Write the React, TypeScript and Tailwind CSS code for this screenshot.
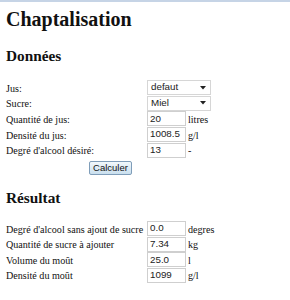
const Field = ({ value }: { value: string }) => (
  <div className="flex h-[15px] w-[39px] items-center border border-[#cfcfcf] bg-white pl-[2px] font-['Liberation_Sans',Arial,sans-serif] text-[9.8px] text-[#222]">
    {value}
  </div>
)

const Dropdown = ({ value }: { value: string }) => (
  <div className="flex h-[15px] w-[64px] items-center justify-between border border-[#d6d6d6] bg-white pl-[3px] pr-[4px] font-['Liberation_Sans',Arial,sans-serif] text-[9.8px] text-[#222]">
    <span>{value}</span>
    <svg width="6" height="4" viewBox="0 0 6 4">
      <path d="M0 0H6L3 3.5Z" fill="#222" />
    </svg>
  </div>
)

const Row = ({ label, children, unit }: { label: string; children: React.ReactNode; unit?: string }) => (
  <div className="flex h-[15.6px] items-center">
    <span className="w-[141px] shrink-0 pt-[1px]">{label}</span>
    {children}
    {unit && <span className="ml-[2px] pt-[1px]">{unit}</span>}
  </div>
)

export default function App() {
  return (
    <div className="h-[300px] w-[290px] border-t-2 border-[#c6d4e6] bg-white font-['Liberation_Serif','Times_New_Roman',serif] text-[10.1px] text-[#111]">
      <div className="px-[6px]">
        <h1 className="mt-[7px] h-[20px] text-[20px] font-bold leading-[20px]">Chaptalisation</h1>
        <h2 className="mt-[18.5px] h-[16px] text-[15.3px] font-bold leading-[16px]">Données</h2>

        <div className="mt-[16.5px] flex flex-col">
          <Row label="Jus:">
            <Dropdown value="defaut" />
          </Row>
          <Row label="Sucre:">
            <Dropdown value="Miel" />
          </Row>
          <Row label="Quantité de jus:" unit="litres">
            <Field value="20" />
          </Row>
          <Row label="Densité du jus:" unit="g/l">
            <Field value="1008.5" />
          </Row>
          <Row label="Degré d'alcool désiré:" unit="-">
            <Field value="13" />
          </Row>
        </div>

        <div className="mt-[3px] flex w-[209px] justify-center">
          <button className="h-[14px] w-[43px] rounded-[2px] border border-[#7f9db9] bg-gradient-to-b from-[#f2f8fc] to-[#c9dfee] font-['Liberation_Sans',Arial,sans-serif] text-[9.5px] leading-none text-[#111]">
            Calculer
          </button>
        </div>

        <h2 className="mt-[15px] h-[16px] text-[15.3px] font-bold leading-[16px]">Résultat</h2>

        <div className="mt-[15px] flex flex-col">
          <Row label="Degré d'alcool sans ajout de sucre" unit="degres">
            <Field value="0.0" />
          </Row>
          <Row label="Quantité de sucre à ajouter" unit="kg">
            <Field value="7.34" />
          </Row>
          <Row label="Volume du moût" unit="l">
            <Field value="25.0" />
          </Row>
          <Row label="Densité du moût" unit="g/l">
            <Field value="1099" />
          </Row>
        </div>
      </div>
    </div>
  )
}
